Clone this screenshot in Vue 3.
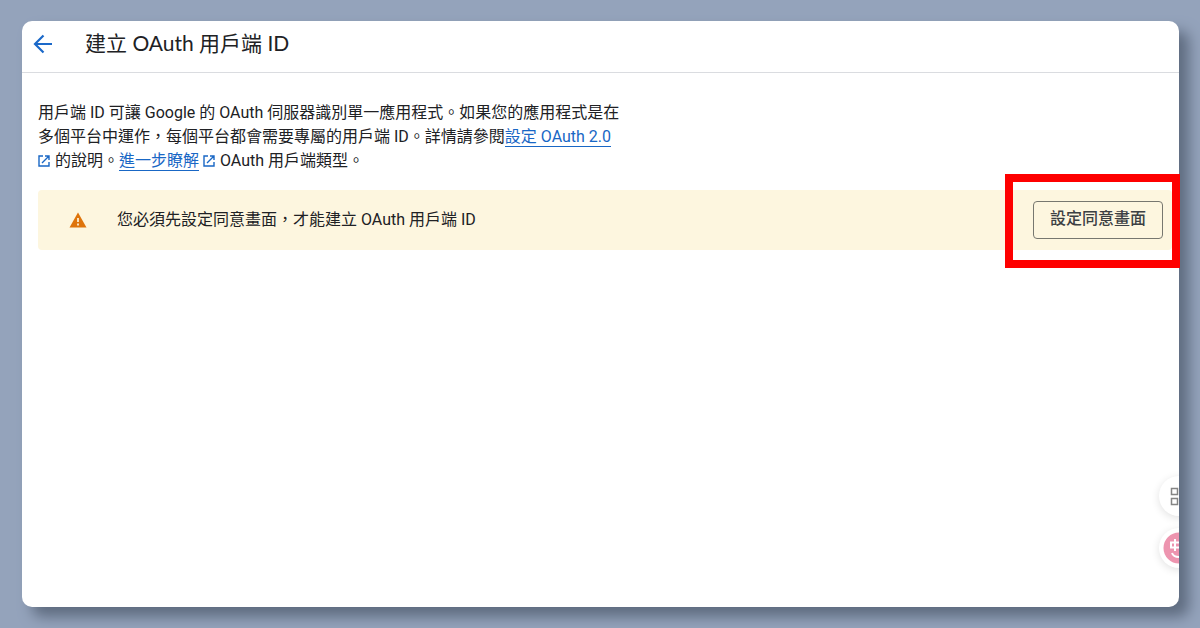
<script setup>
const title = '建立 OAuth 用戶端 ID'
const externalPath = 'M5 1H1v10h10V7M7 1h4v4M11 1 4 8'
</script>

<template>
  <div class="backdrop">
    <main class="card">
      <header class="topbar">
        <button class="back" type="button" aria-label="返回">
          <svg width="20" height="20" viewBox="0 0 20 20" aria-hidden="true">
            <path d="M10.5 1.5 2 10l8.5 8.5M2 10h17" fill="none" stroke="#1b69c9" stroke-width="2.2" />
          </svg>
        </button>
        <h1>{{ title }}</h1>
      </header>

      <section class="content">
        <p class="intro">
          用戶端 ID 可讓 Google 的 OAuth 伺服器識別單一應用程式。如果您的應用程式是在多個平台中運作，每個平台都會需要專屬的用戶端 ID。詳情請參閱<a href="#oauth">設定 OAuth 2.0</a>
          <svg class="external" width="12" height="12" viewBox="0 0 12 12" aria-hidden="true"><path :d="externalPath" /></svg>
          的說明。<a href="#types">進一步瞭解</a>
          <svg class="external" width="12" height="12" viewBox="0 0 12 12" aria-hidden="true"><path :d="externalPath" /></svg>
          OAuth 用戶端類型。
        </p>

        <div class="banner" role="alert">
          <svg class="warning" width="18" height="16" viewBox="0 0 18 16" aria-hidden="true">
            <path d="M9 0.5 17.5 15.5H0.5Z" fill="#de740b" />
            <path d="M9 6v4M9 11.5v2" stroke="#fdf6df" stroke-width="1.7" />
          </svg>
          <span class="message">您必須先設定同意畫面，才能建立 OAuth 用戶端 ID</span>
          <div class="action">
            <button class="consent" type="button">設定同意畫面</button>
            <span class="highlight"></span>
          </div>
        </div>
      </section>

      <aside class="widgets">
        <button class="bubble" type="button" aria-label="應用程式">
          <svg width="40" height="40" viewBox="0 0 40 40" aria-hidden="true">
            <path d="M12.5 12.5h6v6h-6zM12.5 22.5h6v6h-6zM22.5 12.5h6v6h-6zM22.5 22.5h6v6h-6z" fill="none" stroke="#858585" stroke-width="1.5" />
          </svg>
        </button>
        <button class="bubble" type="button" aria-label="翻譯">
          <svg width="40" height="40" viewBox="0 0 40 40" aria-hidden="true">
            <circle cx="20" cy="20" r="15.5" fill="#ed94af" />
            <path d="M12 14.5h10v5H12zM16 11v12M13 25c1 3 3 4 7 4M25 12l5 11M30 12l-5 11" fill="none" stroke="#fff" stroke-width="2" />
          </svg>
        </button>
      </aside>
    </main>
  </div>
</template>

<style>
html,
body,
#app {
  height: 100%;
}

body {
  margin: 0;
}
</style>

<style scoped>
.backdrop {
  box-sizing: border-box;
  min-height: 100%;
  display: flex;
  padding: 21px 21px 21px 22px;
  background: #94a3bb;
  overflow: hidden;
  color: #202124;
  font-family: Roboto, "Noto Sans CJK TC", sans-serif;
}

.card {
  position: relative;
  flex: 1;
  min-width: 0;
  background: #fff;
  border-radius: 10px;
  box-shadow: 10px 10px 14px #5f6c80;
}

.topbar {
  display: flex;
  align-items: center;
  gap: 32px;
  height: 51px;
  padding: 0 11px;
  border-bottom: 1px solid #dadce0;
}

.back {
  display: flex;
  padding: 0 0 6px;
  border: 0;
  background: none;
  cursor: pointer;
}

h1 {
  margin: 0;
  padding-bottom: 8px;
  font-family: Lato, "Noto Sans CJK TC", sans-serif;
  font-size: 21px;
  line-height: 28px;
  font-weight: 400;
}

.content {
  padding: 28px 7px 0 16px;
}

.intro {
  max-width: 584px;
  margin: 0 0 17px;
  font-size: 16px;
  line-height: 24px;
}

.intro a {
  margin-right: 4px;
  color: #1967c5;
  text-decoration: none;
  border-bottom: 1px solid #1967c5;
}

.external {
  margin-right: 1px;
  vertical-align: -1px;
  fill: none;
  stroke: #1967c5;
  stroke-width: 1.4;
}

.banner {
  display: flex;
  align-items: center;
  box-sizing: border-box;
  min-height: 60px;
  padding: 0 9px 0 31px;
  background: #fdf6df;
  border-radius: 4px;
}

.warning {
  flex: none;
}

.message {
  flex: 1;
  margin-left: 30px;
  font-size: 16px;
  line-height: 24px;
}

.action {
  position: relative;
}

.consent {
  display: block;
  height: 38px;
  padding: 0 16px 2px;
  border: 1px solid #77776f;
  border-radius: 4px;
  background: transparent;
  color: #3c4043;
  font-family: Roboto, "Noto Sans CJK TC", sans-serif;
  font-size: 16px;
  line-height: 24px;
  font-weight: 500;
  cursor: pointer;
}

.highlight {
  position: absolute;
  inset: -27px -17px -29px -28px;
  border: 8px solid #fe0000;
  pointer-events: none;
}

.widgets {
  position: absolute;
  right: 0;
  bottom: 19px;
  box-sizing: border-box;
  width: 40px;
  padding: 16px 0 20px 8px;
  overflow: hidden;
  display: flex;
  flex-direction: column;
  gap: 12px;
}

.bubble {
  flex: none;
  width: 40px;
  height: 40px;
  margin-left: 12px;
  padding: 0;
  border: 0;
  border-radius: 50%;
  background: #fff;
  box-shadow: 0 2px 8px rgba(0, 0, 0, 0.12);
}
</style>
